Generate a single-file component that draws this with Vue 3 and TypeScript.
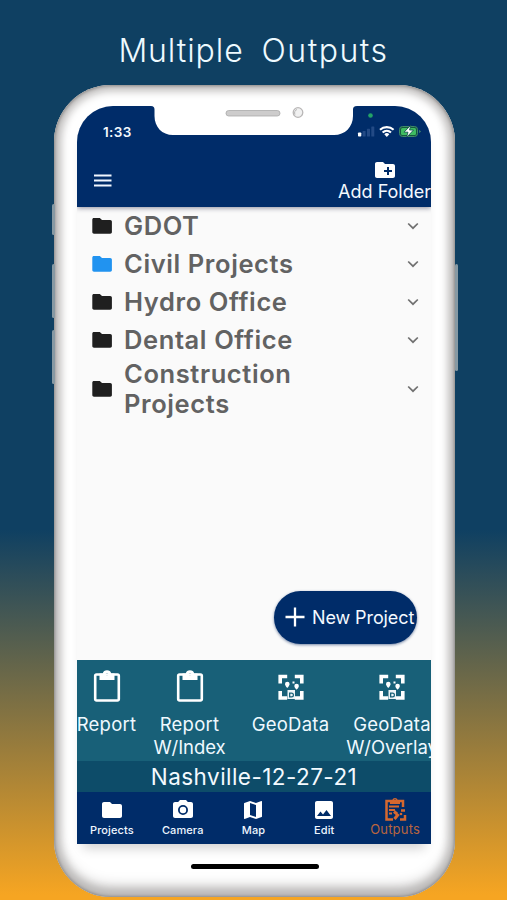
<script setup lang="ts">
interface Folder {
  name: string
  active?: boolean
}

interface OutputItem {
  lines: string[]
  icon: 'clipboard' | 'geo'
}

interface Tab {
  label: string
  icon: string
}

const folders: Folder[] = [
  { name: 'GDOT' },
  { name: 'Civil Projects', active: true },
  { name: 'Hydro Office' },
  { name: 'Dental Office' },
  { name: 'Construction Projects' },
]

const outputs: OutputItem[] = [
  { lines: ['Report'], icon: 'clipboard' },
  { lines: ['Report', 'W/Index'], icon: 'clipboard' },
  { lines: ['GeoData'], icon: 'geo' },
  { lines: ['GeoData', 'W/Overlay'], icon: 'geo' },
]

const tabs: Tab[] = [
  { label: 'Projects', icon: 'M10 4H4c-1.1 0-2 .9-2 2v12c0 1.1.9 2 2 2h16c1.1 0 2-.9 2-2V8c0-1.1-.9-2-2-2h-8l-2-2z' },
  { label: 'Camera', icon: 'M9 2 7.17 4H4c-1.1 0-2 .9-2 2v12c0 1.1.9 2 2 2h16c1.1 0 2-.9 2-2V6c0-1.1-.9-2-2-2h-3.17L15 2zm3 5a5 5 0 1 1 0 10 5 5 0 0 1 0-10zm0 1.8a3.2 3.2 0 1 0 0 6.4 3.2 3.2 0 0 0 0-6.4z' },
  { label: 'Map', icon: 'M20.5 3l-.16.03L15 5.1 9 3 3.36 4.9c-.21.07-.36.25-.36.48V20.5c0 .28.22.5.5.5l.16-.03L9 18.9l6 2.1 5.64-1.9c.21-.07.36-.25.36-.48V3.5c0-.28-.22-.5-.5-.5zM15 19l-6-2.11V5l6 2.11z' },
  { label: 'Edit', icon: 'M21 19V5c0-1.1-.9-2-2-2H5c-1.1 0-2 .9-2 2v14c0 1.1.9 2 2 2h14c1.1 0 2-.9 2-2zM5 18l3.5-4.5 2.5 3 3.5-4.5L19 18z' },
]
</script>

<template>
  <main class="poster">
    <h1 class="headline"><span>Multiple</span><span class="wide">Outputs</span></h1>

    <div class="phone">
      <i class="side-button mute"></i>
      <i class="side-button volume-up"></i>
      <i class="side-button volume-down"></i>
      <i class="side-button power"></i>

      <div class="screen">
        <header class="app-bar">
          <svg class="notch" width="206" height="30" viewBox="0 0 206 30">
            <path d="M0 0C2.5 0 3.500 1.200 3.500 3.500V10C3.500 21 11 29 22 29H183C194 29 202 21 202 10V3.500C202 1.200 203 0 206 0Z" fill="#fff" />
            <rect x="75" y="4.500" width="54" height="5.500" rx="2.700" fill="#cdcccc" stroke="#aaa9a9" stroke-width=".8" />
            <circle cx="147" cy="6.500" r="4.800" fill="#f1f1f1" stroke="#b9b7b7" stroke-width="1.300" />
            <path d="M144 8.500a3.500 3.500 0 0 1 2-5" fill="none" stroke="#b5b5b5" />
          </svg>
          <div class="status">
            <span class="clock">1:33</span>
            <svg class="indicators" width="66" height="26" viewBox="0 0 66 26">
              <circle cx="13.500" cy="4.500" r="2.300" fill="#23a267" />
              <rect x="1" y="21.500" width="3.300" height="4" rx=".8" fill="#fff" />
              <g fill="#234a85">
                <rect x="5.600" y="20" width="3" height="5.500" rx=".6" />
                <rect x="10" y="17.800" width="3" height="7.700" rx=".6" />
                <rect x="14.300" y="15.500" width="3" height="10" rx=".6" />
              </g>
              <g fill="none" stroke="#fff" stroke-width="2.100">
                <path d="M23 18.800a10 10 0 0 1 13.600 0" />
                <path d="M25.600 21.500a6.200 6.200 0 0 1 8.400 0" />
              </g>
              <path d="M27.300 23.200a3.700 3.700 0 0 1 5 0L29.800 26z" fill="#fff" />
              <rect x="42.500" y="15.500" width="18" height="10" rx="3" fill="#15583f" stroke="#3f8a68" />
              <rect x="44" y="17" width="15" height="7" rx="1.500" fill="#3fbd62" />
              <path d="M62.300 18.800v3.500l1.500-1.700z" fill="#4c9d6c" />
              <path d="M54 14l-7 7.200h4L49.500 26.500l7-7.500h-4z" fill="#fff" stroke="#0b4b4a" stroke-width=".8" />
            </svg>
          </div>
          <div class="toolbar">
            <svg class="menu" width="18" height="14" viewBox="0 0 18 14">
              <path d="M0 1.500h17.500M0 6.500h17.500M0 11.500h17.500" stroke="#f2f7ff" stroke-width="2" />
            </svg>
            <div class="add-folder">
              <svg width="24" height="24" viewBox="0 0 24 24">
                <path fill-rule="evenodd" fill="#fff" d="M20 6h-8l-2-2H4c-1.110 0-1.990.89-1.990 2L2 18c0 1.110.89 2 2 2h16c1.110 0 2-.89 2-2V8c0-1.110-.89-2-2-2zm-1 8h-3v3h-2v-3h-3v-2h3V9h2v3h3v2z" />
              </svg>
              <span>Add Folder</span>
            </div>
          </div>
        </header>

        <section class="folders">
          <div v-for="folder in folders" :key="folder.name" class="folder">
            <svg class="folder-icon" :class="{ active: folder.active }" width="24" height="24" viewBox="0 0 24 24">
              <path d="M9.800 4H4c-1.100 0-1.700.7-1.700 1.700V18c0 1.100.8 1.700 1.700 1.700h16.200c1 0 1.700-.7 1.700-1.700V7.800c0-1.100-.7-1.800-1.700-1.800h-8.200l-2.200-2z" />
            </svg>
            <span class="folder-name">{{ folder.name }}</span>
            <svg width="12" height="8" viewBox="0 0 12 8">
              <path d="M1.200 1.500 6 6.200l4.800-4.700" fill="none" stroke="#707070" stroke-width="1.700" />
            </svg>
          </div>
          <button class="new-project">
            <svg width="20" height="20" viewBox="0 0 20 20">
              <path d="M10 .5v19M.5 10h19" stroke="#fff" stroke-width="2.300" />
            </svg>
            <span>New Project</span>
          </button>
        </section>

        <section class="outputs">
          <div v-for="(item, i) in outputs" :key="i" class="output">
            <svg v-if="item.icon === 'clipboard'" class="output-icon" width="28" height="34" viewBox="0 0 28 34">
              <path d="M3.500 4.500h21a1.300 1.300 0 0 1 1.300 1.300v23.400a1.300 1.300 0 0 1-1.300 1.300h-21a1.300 1.300 0 0 1-1.300-1.300V5.800A1.300 1.300 0 0 1 3.500 4.500z" fill="none" stroke="#fff" stroke-width="2.600" />
              <path fill-rule="evenodd" d="M6.500 3.500h3.300C10.200 1.500 11.800.3 14 .3s3.800 1.200 4.200 3.200h3.300v6.500h-15zM14 3a1.300 1.300 0 1 0 0 2.600A1.300 1.300 0 0 0 14 3z" fill="#fff" />
            </svg>
            <svg v-else class="output-icon" width="28" height="34" viewBox="0 0 28 34">
              <path d="M3.200 13.500V6.500h7M17.800 6.500h7v7M3.200 21v7h7M17.800 28h7v-7" fill="none" stroke="#fff" stroke-width="3.600" />
              <path d="M8 14a2.300 2.300 0 1 1 4.600 0c0 1.700-2.300 4-2.300 4S8 15.700 8 14zM17.300 16a2.300 2.300 0 1 1 4.600 0c0 1.700-2.300 3.700-2.300 3.700s-2.300-2-2.300-3.700zM15.500 11.500h2v2h-2z" fill="#fff" />
              <path fill-rule="evenodd" d="M10.500 20h7.500v9h-7.500zM12 22.500v5h2.500a2.500 2.500 0 0 0 0-5zm1.300 1.200h1.200a1.300 1.300 0 0 1 0 2.600h-1.200z" fill="#eef5f8" />
            </svg>
            <span v-for="line in item.lines" :key="line" class="output-label">{{ line }}</span>
          </div>
        </section>

        <div class="current-project">Nashville-12-27-21</div>

        <nav class="tabs">
          <a v-for="tab in tabs" :key="tab.label" class="tab">
            <svg width="24" height="24" viewBox="0 0 24 24"><path fill-rule="evenodd" :d="tab.icon" fill="#fff" /></svg>
            <span>{{ tab.label }}</span>
          </a>
          <a class="tab selected">
            <svg width="24" height="26" viewBox="0 0 24 26">
              <g fill="none" stroke="#d5682f">
                <path d="M10 22.500H3.500V4h16.500v6" stroke-width="2.500" />
                <path d="M6 9.500h10M6 13h6M6 16.500h3" stroke-width="2" />
                <path d="M18 13.500h4M22 18v4.500h-5" stroke-width="2.500" />
                <path d="M11 14.500l3 2.500M15.500 17l-4 5" stroke-width="3" />
              </g>
              <circle cx="18" cy="17" r="1.300" fill="#d5682f" />
              <path fill-rule="evenodd" d="M7 3h2.300a2.800 2.800 0 0 1 5.400 0H17v4H7zm5-.7a1.100 1.100 0 1 0 0 2.200 1.100 1.100 0 0 0 0-2.200z" fill="#d5682f" />
            </svg>
            <span>Outputs</span>
          </a>
        </nav>
      </div>
      <i class="home-indicator"></i>
    </div>
  </main>
</template>

<style>
body {
  margin: 0;
}
</style>

<style scoped>
.poster {
  box-sizing: border-box;
  width: 507px;
  height: 900px;
  overflow: hidden;
  background: linear-gradient(#0f4062 0, #0f4062 530px, #f6a522 895px);
  font-family: Inter, "Liberation Sans", sans-serif;
}
.headline {
  display: flex;
  justify-content: center;
  gap: 18px;
  height: 85px;
  margin: 0;
  padding-top: 31px;
  box-sizing: border-box;
  color: #eefaff;
  font-size: 32px;
  font-weight: 300;
  line-height: 40px;
  letter-spacing: .9px;
}
.headline .wide {
  letter-spacing: 1.500px;
}
.phone {
  position: relative;
  box-sizing: border-box;
  width: 401px;
  height: 812px;
  margin-left: 54px;
  padding: 21px 23px 0;
  border-radius: 57px;
  background: #fff;
  box-shadow: inset 0 0 3px 1px #8d8b8a, inset 0 0 9px 6px #bfbdbc, inset 0 -9px 16px -2px #a3a1a0;
}
.side-button {
  position: absolute;
  width: 3px;
  background: #8799a3;
  border-radius: 2px;
}
.mute { left: -2px; top: 119px; height: 31px; }
.volume-up { left: -2px; top: 179px; height: 54px; }
.volume-down { left: -2px; top: 245px; height: 54px; }
.power { right: -3px; top: 179px; height: 107px; }
.screen {
  display: flex;
  flex-direction: column;
  width: 354px;
  height: 738px;
  border-radius: 36px 36px 0 0;
  overflow: hidden;
  box-shadow: 0 10px 12px -6px #cfcfcf;
}
.app-bar {
  position: relative;
  z-index: 1;
  height: 100.500px;
  flex: none;
  background: #002c69;
  box-shadow: 0 1px 5px #8c8c9c;
  color: #f4f9ff;
}
.notch {
  position: absolute;
  left: 74px;
  top: 0;
}
.status {
  display: flex;
  justify-content: space-between;
  height: 38px;
  padding: 5px 8px 0 26px;
  box-sizing: border-box;
}
.clock {
  padding-top: 12px;
  font-size: 13.500px;
  font-weight: 600;
  line-height: 18px;
  letter-spacing: .4px;
}
.toolbar {
  display: flex;
  justify-content: space-between;
  padding-left: 17px;
}
.menu {
  margin-top: 30px;
}
.add-folder {
  display: flex;
  flex-direction: column;
  align-items: center;
  padding-top: 14px;
  font-size: 18px;
  line-height: 20px;
  letter-spacing: 0;
}
.folders {
  position: relative;
  box-sizing: border-box;
  height: 453px;
  flex: none;
  padding-top: .5px;
  background: #fafafa;
}
.folder {
  display: flex;
  align-items: center;
  min-height: 38px;
  padding: 0 12px 0 13px;
}
.folder-icon {
  fill: #1f1f1f;
}
.folder-icon.active {
  fill: #2193f0;
}
.folder-name {
  width: 200px;
  margin: 0 auto 0 10px;
  color: #626262;
  font-size: 25.500px;
  font-weight: 600;
  line-height: 30px;
  letter-spacing: .6px;
}
.new-project {
  position: absolute;
  right: 14px;
  bottom: 16px;
  display: flex;
  align-items: center;
  gap: 7px;
  width: 143px;
  height: 53px;
  padding: 0 0 0 11px;
  border: 0;
  border-radius: 27px;
  background: #002c69;
  box-shadow: 0 1px 3px #7284a4;
  color: #f4f9ff;
  font: 18px Inter, "Liberation Sans", sans-serif;
  letter-spacing: -.1px;
  white-space: nowrap;
}
.outputs {
  display: grid;
  grid-template-columns: 59px 107px 95px 108px;
  height: 101.500px;
  flex: none;
  padding-top: 10px;
  box-sizing: border-box;
  background: #186078;
  color: #eff9ff;
}
.output {
  display: flex;
  flex-direction: column;
  align-items: center;
}
.output-icon {
  margin-bottom: 9.500px;
}
.output-label {
  font-size: 18.500px;
  line-height: 23px;
  letter-spacing: .25px;
}
.output-label + .output-label {
  letter-spacing: -.05px;
}
.current-project {
  height: 31px;
  flex: none;
  background: #0d4c69;
  color: #f4faff;
  font-size: 22.500px;
  line-height: 32px;
  text-align: center;
  letter-spacing: .45px;
}
.tabs {
  display: grid;
  grid-template-columns: repeat(5, 1fr);
  flex: 1;
  background: #002c69;
}
.tab {
  display: flex;
  flex-direction: column;
  align-items: center;
  padding-top: 6px;
  margin-left: -1px;
  color: #eef6ff;
  font-size: 11px;
  font-weight: 500;
  line-height: 16px;
  letter-spacing: .1px;
}
.tab.selected {
  padding-top: 5px;
  color: #b8653f;
  font-size: 13px;
  font-weight: 400;
  line-height: 13px;
  letter-spacing: .2px;
}
.home-indicator {
  display: block;
  width: 128px;
  height: 5px;
  margin: 20px auto 0;
  border-radius: 3px;
  background: #000;
}
</style>
